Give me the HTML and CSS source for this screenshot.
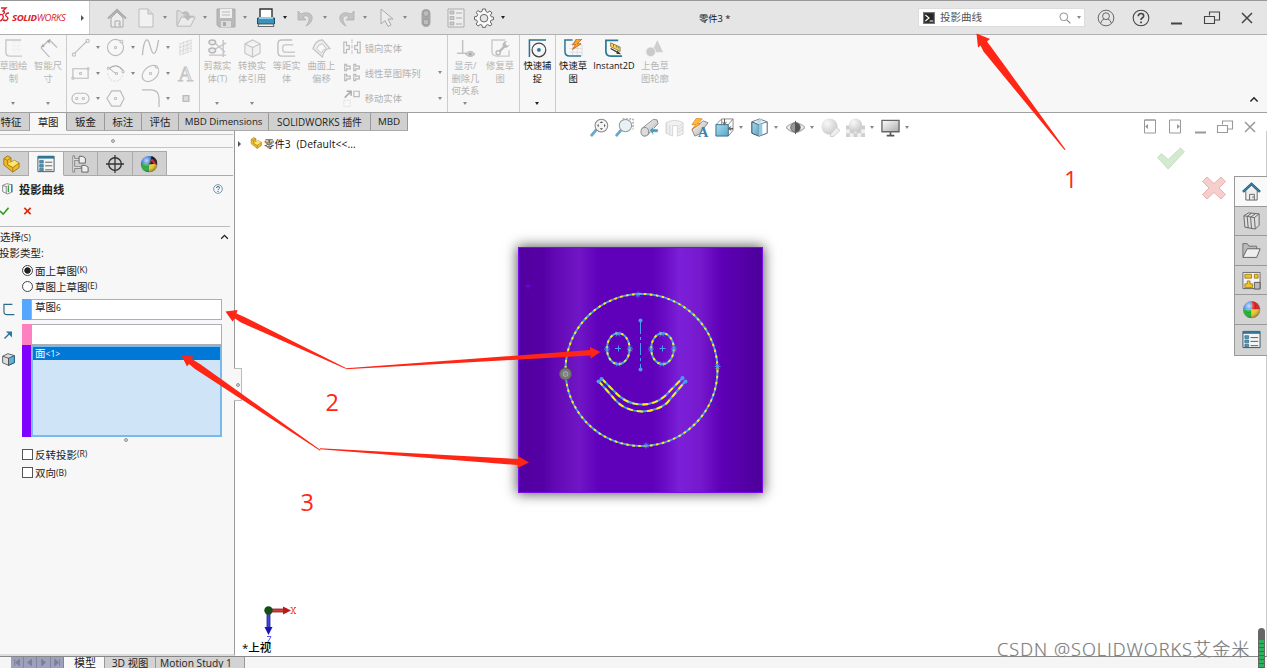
FILE: index.html
```html
<!DOCTYPE html>
<html lang="zh-CN">
<head>
  <meta charset="UTF-8">
  <meta name="viewport" content="width=device-width, initial-scale=1.0">
  <title>SOLIDWORKS - 零件3</title>
  <link rel="stylesheet" href="styles.css">
</head>
<body>

  <!-- Icon sprite -->
  <svg class="sprite" aria-hidden="true">
    <defs>
      <linearGradient id="metal" x1="0" y1="0" x2="1" y2="1"><stop offset="0" stop-color="#fff"/><stop offset="1" stop-color="#aaa"/></linearGradient>
      <radialGradient id="shade" cx=".35" cy=".3" r=".75"><stop offset="0" stop-color="#fff" stop-opacity=".75"/><stop offset=".5" stop-color="#fff" stop-opacity="0"/><stop offset="1" stop-color="#000" stop-opacity=".45"/></radialGradient>
      <radialGradient id="grayBall" cx=".35" cy=".3" r=".75"><stop offset="0" stop-color="#f8f8f8"/><stop offset="1" stop-color="#c9c9c9"/></radialGradient>
      <linearGradient id="blueFace" x1="0" y1="0" x2="1" y2="1"><stop offset="0" stop-color="#a9dcf0"/><stop offset="1" stop-color="#58a5c8"/></linearGradient>
    </defs>
    <symbol id="home" viewBox="0 0 20 20"><path d="M4 10v9h12v-9l-6-6z" fill="#ededed" stroke="#aaa"/><path d="M1 10.5 10 2l9 8.500" fill="none" stroke="#aaa" stroke-width="2"/><path d="M8 19v-6h5v6M12 15v2" fill="none" stroke="#aaa"/></symbol>
    <symbol id="home-color" viewBox="0 0 20 20"><path d="M4 9v10h12V9l-6-6z" fill="#eee" stroke="#666"/><path d="M1 10.500 10 2l9 8.500" fill="none" stroke="#1c5f80" stroke-width="2.600"/><path d="M1.500 10 10 2l8.500 8" fill="none" stroke="#4492b5" stroke-width="1"/><path d="M8 19v-6h5v6M11.500 15v2" fill="none" stroke="#666"/></symbol>
    <symbol id="new" viewBox="0 0 20 20"><path d="M3 1h9l5 5v13H3z" fill="#f1f1f1" stroke="#bbb"/><path d="M12 1v5h5" fill="#ddd" stroke="#bbb"/></symbol>
    <symbol id="open" viewBox="0 0 22 20"><path d="M1 18V2h3l2 2h3v4h10v3" fill="#ddd" stroke="#b5b5b5"/><path d="M1 19 6 9h15l-5 10z" fill="#ebebeb" stroke="#b5b5b5"/><path d="M7 4c4-3 8-1 8 4h3l-5 5-5-5h3c0-2-2-3-4-2z" fill="#bcbcbc"/></symbol>
    <symbol id="save" viewBox="0 0 20 20"><path d="M1 1h18v18H3l-2-2z" fill="#b9b9b9" stroke="#aaa"/><path d="M4 1h12v9H4z" fill="#eee"/><path d="M6 4h8M6 7h8" stroke="#bbb"/><path d="M5 13h10v6H5z" fill="#ddd"/><path d="M7 14h3v4H7z" fill="#aaa"/></symbol>
    <symbol id="print" viewBox="0 0 20 20"><path d="M4 10V1h12v9" fill="#fff" stroke="#333" stroke-width="1.400"/><path d="M1.500 10h17v6h-17z" fill="#3b93ba" stroke="#17506e"/><path d="M3 9h14v2H3z" fill="#8ed0eb"/><path d="M3 16h14l1 2.500H2z" fill="#f4f4f4" stroke="#666"/></symbol>
    <symbol id="undo" viewBox="0 0 20 20"><path d="M2 3v9h8L7 9c4-3 8 0 5 6l-2 3c9-4 8-15-2-13L5 6z" fill="#c4c4c4" stroke="#aaa" stroke-width=".7"/></symbol>
    <symbol id="cursor" viewBox="0 0 20 20"><path d="M5 1v15l4-3.500 3 6 3-1.500-3-6h5z" fill="#ececec" stroke="#aaa"/></symbol>
    <symbol id="traffic" viewBox="0 0 20 20"><rect x="5.500" y="1" width="9" height="18" rx="4.500" fill="#a7a7a7"/><circle cx="10" cy="5.500" r="3" fill="#bcbcbc" stroke="#999"/><circle cx="10" cy="14" r="3" fill="#bcbcbc" stroke="#999"/></symbol>
    <symbol id="list" viewBox="0 0 20 20"><path d="M2 1h16v18H2z" fill="#eee" stroke="#aaa"/><path d="M4 3h4v3H4zM4 8.500h4v3H4zM4 14h4v3H4z" fill="#ccc" stroke="#aaa" stroke-width=".8"/><path d="M10 5h6M10 10h6M10 16h6" stroke="#aaa"/></symbol>
    <symbol id="gear" viewBox="0 0 20 20"><path d="M8.500 1h3l.5 2.600 1.800.8L16 2.900 18 5l-1.600 2.100.8 1.700 2.300.3v2.600l-2.400.5-.8 1.800L18 16.300 16 18l-2.200-1.400-1.700.8-.6 2h-3L8 17.200l-1.700-.7L4.100 18 2 16l1.500-2.100-.8-1.800-2.200-.4V8.800L3 8.300l.7-1.700L2.200 4.400 4 2.600l2.200 1.500L8 3.400z" fill="#f8f8f8" stroke="#666" stroke-width="1"/><circle cx="10" cy="10.200" r="3.800" fill="#e5e5e5" stroke="#666"/></symbol>

    <symbol id="sketch" viewBox="0 0 20 20"><path d="M8 3h11M8 7h11M8 11h11M11 1v14M15 1v14" stroke="#f0f0f0"/><path d="M18 1H2v13q0 4 4 4h13" fill="none" stroke="#c8c8c8" stroke-width="1.500"/></symbol>
    <symbol id="smartdim" viewBox="0 0 20 20"><path d="m2 9 9-8 8 8M2 9l9 10M3 8.500 10 2" fill="none" stroke="#bdbdbd" stroke-width="1.300"/><path d="m2 9 4-1-2-3zM12 0 8 2l3 3z" fill="#aaa"/></symbol>
    <symbol id="line" viewBox="0 0 20 20"><path d="M3 17 17 3" stroke="#bbb" stroke-width="1.200"/><path d="M1.500 16h3v3h-3zM16 1.500h3v3h-3z" fill="#f7f7f7" stroke="#bbb"/></symbol>
    <symbol id="circle" viewBox="0 0 20 20"><circle cx="10" cy="10" r="8.500" fill="none" stroke="#bbb" stroke-width="1.200"/><path d="M9 9h2v2H9zM15 2.500h2.500V5H15z" fill="#fff" stroke="#bbb"/></symbol>
    <symbol id="spline" viewBox="0 0 20 20"><path d="M1.500 18C3 0 7-2 9.500 8s6 14 9-6" fill="none" stroke="#bbb" stroke-width="1.400"/></symbol>
    <symbol id="plane" viewBox="0 0 20 20"><path d="m4 6 12-4v12L4 18zM4 10l12-4M4 14l12-4M8 4v13M12 3v13" fill="#f1f1f1" stroke="#d2d2d2" stroke-dasharray="2 1"/></symbol>
    <symbol id="rect" viewBox="0 0 20 20"><path d="M2 5h16v10H2z" fill="none" stroke="#bbb" stroke-width="1.200"/><path d="M9 9h2v2H9zM1 14h2v2H1zM17 4h2v2h-2z" fill="#fff" stroke="#bbb"/></symbol>
    <symbol id="arc" viewBox="0 0 20 20"><path d="M3 5q8-7 15 2" fill="none" stroke="#b0b0b0" stroke-width="1.400"/><path d="M2 10c1 11 15 11 16-1" fill="none" stroke="#d5d5d5" stroke-dasharray="2 1.500"/><path d="m4 5 6 5" stroke="#aaa"/><path d="M10 9h2v2h-2zM1.500 3.500h2v2h-2zM17 7h2v2h-2z" fill="#fff" stroke="#bbb"/></symbol>
    <symbol id="ellipse" viewBox="0 0 20 20"><ellipse cx="10" cy="10" rx="10" ry="7" transform="rotate(-43 10 10)" fill="none" stroke="#bbb" stroke-width="1.200"/><path d="M9 9h2v2H9zM15 2h2v2h-2z" fill="#fff" stroke="#bbb"/></symbol>
    <symbol id="slot" viewBox="0 0 20 20"><rect x="1" y="4.500" width="18" height="11" rx="5.500" fill="none" stroke="#bbb" stroke-width="1.200"/><path d="M5 9h2v2H5zM12 9h2v2h-2z" fill="#fff" stroke="#bbb"/></symbol>
    <symbol id="hexagon" viewBox="0 0 20 20"><path d="m6 2 9 0 4 8-4 8H6l-5-8z" fill="none" stroke="#bbb" stroke-width="1.200"/><path d="M9 9h2v2H9z" fill="#fff" stroke="#bbb"/></symbol>
    <symbol id="fillet" viewBox="0 0 20 20"><path d="M1 1h9q9 0 9 9v9" fill="none" stroke="#bbb" stroke-width="1.300"/></symbol>
    <symbol id="point" viewBox="0 0 20 20"><path d="M7.500 7h6v6h-6z" fill="#ddd" stroke="#bbb" stroke-width="1.500"/></symbol>
    <symbol id="trim" viewBox="0 0 20 20"><path d="m7 4 11 10M7 11 19 4M1 17h18M16 1v18" stroke="#c6c6c6" stroke-width="1.500"/><ellipse cx="4.500" cy="3.500" rx="3.500" ry="2.500" fill="#eee" stroke="#b8b8b8" stroke-width="1.600"/><ellipse cx="4.500" cy="12" rx="3.500" ry="2.500" fill="#eee" stroke="#b8b8b8" stroke-width="1.600"/></symbol>
    <symbol id="convert" viewBox="0 0 20 20"><path d="m2 5 8-4 8 4v10l-8 4-8-4zM2 5l8 4 8-4M10 9v10" fill="#f1f1f1" stroke="#c6c6c6" stroke-width="1.200"/></symbol>
    <symbol id="offset" viewBox="0 0 20 20"><path d="M16 1H5Q1 1 1 5v9q0 4 4 4h14" fill="none" stroke="#c0c0c0" stroke-width="1.500"/><path d="M17 6H9Q6 6 6 9v2q0 3 3 3h10" fill="none" stroke="#ccc" stroke-width="1.500"/></symbol>
    <symbol id="surface" viewBox="0 0 20 20"><path d="M1 10Q4 1 11 1l8 9q-6 0-8 9z" fill="#ededed" stroke="#c3c3c3" stroke-width="1.300"/><path d="M5 10q2-5 6-5l4 5q-4 1-5 5z" fill="#f8f8f8" stroke="#c3c3c3"/></symbol>
    <symbol id="mirror" viewBox="0 0 22 20"><path d="M11 1v18" stroke="#bbb" stroke-dasharray="4 2"/><path d="M2 4v12h3v-4h3V8H5V4zM20 4v12h-3v-4h-3V8h3V4z" fill="none" stroke="#bbb" stroke-width="1.300"/></symbol>
    <symbol id="pattern" viewBox="0 0 22 20"><path d="M3 1v7h2V6h4V3H5V1zM13 1v7h2V6h4V3h-4V1zM3 12v7h2v-2h4v-3H5v-2zM13 12v7h2v-2h4v-3h-4v-2z" fill="none" stroke="#b8b8b8" stroke-width="1.300"/></symbol>
    <symbol id="move" viewBox="0 0 22 20"><path d="m3 9 7-7M5 2h5v5" fill="none" stroke="#aaa" stroke-width="1.700"/><path d="M13 2h6v6h-6z" fill="none" stroke="#bbb" stroke-width="1.300"/><path d="M2 12h7v7H2z" fill="none" stroke="#ddd" stroke-dasharray="2 1"/></symbol>
    <symbol id="relation" viewBox="0 0 20 20"><path d="M7 1v14M1 15h12" stroke="#c3c3c3" stroke-width="1.600"/><path d="M10 16q5-6 10 0-5 5-10 0z" fill="#ccc" stroke="#bbb"/><circle cx="15" cy="16" r="1.500" fill="#aaa"/></symbol>
    <symbol id="repair" viewBox="0 0 20 20"><path d="M15 1H1v12q0 5 5 5h13v-6" fill="none" stroke="#ccc" stroke-width="1.500"/><path d="m8 14 7-7" stroke="#bbb" stroke-width="2.600"/><path d="M17 2q-4 0-5 4 1 4 5 3l3-3-3 1-2-2z" fill="#bbb"/><circle cx="7.500" cy="14.500" r="2.200" fill="#f7f7f7" stroke="#bbb" stroke-width="1.500"/></symbol>
    <symbol id="snap" viewBox="0 0 20 20"><path d="M1.500 19V1H19" fill="none" stroke="#2d718e" stroke-width="1.600"/><circle cx="11.500" cy="11.500" r="7.200" fill="none" stroke="#444" stroke-width="1.300"/><circle cx="11.500" cy="11.500" r="2" fill="#2d789a"/></symbol>
    <symbol id="rapid" viewBox="0 0 20 20"><path d="M6 6h13M6 10h13M6 14h13M9 4v14M14 8v10M19 6v12" stroke="#ddd"/><path d="M9 1H1v12q0 5 5 5h12" fill="none" stroke="#2c7898" stroke-width="1.600"/><path d="m13 0-4 6h3l-3 5 9-6h-4l5-5z" fill="#f9a52a" stroke="#b8561b" stroke-width=".8"/></symbol>
    <symbol id="instant" viewBox="0 0 20 20"><path d="M15 1.500H2V13q0 5 5 5h12" fill="none" stroke="#2c7898" stroke-width="1.800"/><path d="m7 4 10 4.500v4.500L7 8z" fill="#fbd457" stroke="#776b36" stroke-width=".8"/><path d="M10 5.500v2.500M13 7v2M15 8v2" stroke="#665b31" stroke-width=".8"/><path d="m7 10 8 4.500" stroke="#333" stroke-width="1.400"/><path d="m14 12 4 4-5-.5z" fill="#333"/></symbol>
    <symbol id="shaded" viewBox="0 0 20 20"><path d="m13 1 6 13H7z" fill="#cfcfcf"/><circle cx="6" cy="13.500" r="5" fill="#cacaca" stroke="#eee"/></symbol>

    <symbol id="fit" viewBox="0 0 20 20"><path d="m1 19 6-7" stroke="#6ba8c4" stroke-width="3"/><circle cx="12" cy="8" r="6.700" fill="#f4f4f4" stroke="#888" stroke-width="1.100"/><path d="m12 3.500-1.700 1.700h3.400zM12 12.500l-1.700-1.700h3.400zM7.500 8l1.700-1.700v3.400zM16.500 8l-1.700-1.700v3.400z" fill="#555"/></symbol>
    <symbol id="area" viewBox="0 0 20 20"><path d="M8 1h11v11" fill="none" stroke="#777" stroke-dasharray="2 1.500"/><path d="m1 19 6-7" stroke="#6ba8c4" stroke-width="3"/><circle cx="11" cy="8" r="6.500" fill="#e8f2f6" stroke="#999" stroke-width="1.100"/></symbol>
    <symbol id="prev" viewBox="0 0 20 20"><path d="m2 11 12-9.500 4 .5 1 4L8 18l-4 1z" fill="url(#metal)" stroke="#888"/><ellipse cx="5" cy="14.500" rx="4" ry="4.500" fill="#ddd" stroke="#888"/><path d="m10 13 4-4v2.500h5v3.500h-5v3z" fill="#4a9bc0" stroke="#fff" stroke-width=".5"/></symbol>
    <symbol id="section" viewBox="0 0 20 20"><path d="M1 5q9-5 18 0v12l-6 2V8H8v11l-7-3z" fill="#f1f1f1" stroke="#d6d6d6"/><path d="m14 9 5-3M14 12l5-3M14 15l5-3M2 6v11M5 7v11" stroke="#d6d6d6"/></symbol>
    <symbol id="orient" viewBox="0 0 20 20"><path d="m1 7 6-6h12v12l-5 6M19 1l-5 6M7 1v6M14 12h5" fill="none" stroke="#888"/><path d="M1 7h13v12H1z" fill="url(#blueFace)" stroke="#386d88"/><path d="M10 1v5M8 4l2 3 2-3M19 11h-4m2-2-3 2 3 2" fill="none" stroke="#555"/></symbol>
    <symbol id="display" viewBox="0 0 20 20"><path d="m2 4 8-3 8 3v12l-8 3-8-3z" fill="#f5f5f5" stroke="#678"/><path d="m2 4 7 3v12l-7-3z" fill="url(#blueFace)" stroke="#456"/><path d="m9 7 9-3v12l-9 3z" fill="#fff" stroke="#678"/><path d="m9 7 4-1.300v11.800L9 19z" fill="#8fcbe3"/><path d="m6 3 6-2v3L9 6z" fill="#b7dfee"/></symbol>
    <symbol id="eye" viewBox="0 0 20 20"><path d="M0 10Q10 0 20 10 10 20 0 10z" fill="#eee" stroke="#aaa" stroke-width="1.200"/><circle cx="10" cy="10" r="5" fill="#999" stroke="#666"/><path d="M10 5a5 5 0 0 1 0 10z" fill="#555"/><path d="M10 3v14" stroke="#555"/></symbol>
    <symbol id="appear" viewBox="0 0 20 20"><circle cx="9" cy="9" r="8.500" fill="url(#grayBall)"/><path d="m10 17 6-7 4 3-6 6-4 1z" fill="#eee" stroke="#ccc"/></symbol>
    <symbol id="scene" viewBox="0 0 20 20"><path d="M0 9h20v11H0z" fill="#f0f0f0"/><path d="M0 8h5v4H0zM4 12h5v4H4zM11 12h5v4h-5zM0 16h4v4H0zM8 16h4v4H8zM16 16h4v4h-4zM15 8h5v4h-5z" fill="#cfcfcf"/><circle cx="10" cy="7.500" r="7" fill="url(#grayBall)"/></symbol>
    <symbol id="monitor" viewBox="0 0 20 20"><path d="M1 2.500h18v12H1z" fill="url(#metal)" stroke="#666" stroke-width="1.400"/><path d="M10 15v3M6 18.500h8" stroke="#555" stroke-width="1.800"/></symbol>

    <symbol id="part" viewBox="0 0 20 20"><path d="m2 4 4-3 4 2v5l4-2 5 3v5l-7 5-10-8z" fill="#efbd2b" stroke="#9b7514"/><path d="m2 4 4 2 4-3M6 6v5l6 3 7-5M12 14v5" fill="none" stroke="#a67d18"/><path d="m7 10 3-2 4-2 4 3-6 4z" fill="#ffe477"/></symbol>
    <symbol id="prop" viewBox="0 0 20 20"><path d="M1 1.500h18v17H1z" fill="#f5f5f5" stroke="#2f5367"/><path d="M1 1h18v3H1z" fill="#2f7595"/><path d="M3 6h4v3H3zM3 10.500h4v3H3zM3 15h4v2.500H3z" fill="#4d9aba" stroke="#2d607a" stroke-width=".7"/><path d="M9 8h8M9 12h8M9 16.500h8" stroke="#555"/></symbol>
    <symbol id="config" viewBox="0 0 20 20"><path d="M2 1v18h2v-4h7v-2H4V6h6V4H4V1z" fill="#eee" stroke="#777" stroke-width=".9"/><path d="M9 1.500h4l3 2V9H9zM12 11.500h4l3 2V19h-7z" fill="#eee" stroke="#666" stroke-width="1.100"/></symbol>
    <symbol id="target" viewBox="0 0 20 20"><circle cx="10" cy="10" r="7" fill="none" stroke="#333" stroke-width="1.500"/><path d="M10 0v20M0 10h20" stroke="#333" stroke-width="1.400"/></symbol>
    <symbol id="ball" viewBox="0 0 20 20"><path d="M10 10V1a9 9 0 0 0-9 9z" fill="#2a7be0"/><path d="M10 10V1a9 9 0 0 1 9 9z" fill="#d41818"/><path d="M10 10H1a9 9 0 0 0 9 9z" fill="#18b02c"/><path d="M10 10h9a9 9 0 0 1-9 9z" fill="#f3c62c"/><circle cx="10" cy="10" r="9.300" fill="url(#shade)"/></symbol>
    <symbol id="ball-dark" viewBox="0 0 20 20"><circle cx="10" cy="10" r="9" fill="#1e62ce"/><path d="M10 10 13 1q7 3 6 10z" fill="#111"/><path d="m13 5 5 7" stroke="#d3222a" stroke-width="2.500"/><path d="M1 10q5-2 9 1v8q-9-1-9-9z" fill="#2aa83b"/><path d="M10 11q5-2 9 0-1 8-9 8z" fill="#f2cb26"/><circle cx="10" cy="10" r="9.300" fill="url(#shade)"/></symbol>
    <symbol id="project" viewBox="0 0 18 20"><path d="m1 5 7-3 8 2v12l-7 3-8-4zM7 6v12M1 5l6 2" fill="#f4f4f4" stroke="#777" stroke-width="1.300"/><path d="M10.500 5v11" stroke="#29a944" stroke-width="2.200"/><path d="M16 3v13" stroke="#2c84bb" stroke-width="2.400"/></symbol>
    <symbol id="curve" viewBox="0 0 20 20"><path d="M16 2H3v11q0 5 5 5h11" fill="none" stroke="#2c6c88" stroke-width="1.800"/></symbol>
    <symbol id="direction" viewBox="0 0 20 20"><path d="m3 17 9-9" fill="none" stroke="#2c7898" stroke-width="3"/><path d="M6 3h12v12z" fill="#2c7898"/></symbol>
    <symbol id="face" viewBox="0 0 20 20"><path d="m1 5 8-4 10 3v11l-9 4-9-4z" fill="#ddd" stroke="#555" stroke-width="1.400"/><path d="m10 8 9-4v11l-9 4z" fill="#60b3d7" stroke="#245a75" stroke-width="1.400"/><path d="m1 5 9 3v11" fill="none" stroke="#555" stroke-width="1.400"/></symbol>

    <symbol id="library" viewBox="0 0 20 20"><path d="m2 5 5-3 11 1v12l-4 4-11-2z" fill="#ddd" stroke="#666"/><path d="m2 5 11 2 1 12M13 7l5-4M5.500 6l1 12M9 6.500l1 12M5.500 5.500l4.500-3M9 6.500l5-3.500" fill="none" stroke="#666"/></symbol>
    <symbol id="folder" viewBox="0 0 22 20"><path d="M1 17V2h5l2 3h9v4" fill="#bbb" stroke="#666"/><path d="M1 18 6 8h15l-4 10z" fill="#eee" stroke="#555"/></symbol>
    <symbol id="palette" viewBox="0 0 20 20"><path d="M1 1.500h18v17H1z" fill="#f4f4f4" stroke="#666"/><path d="M3 3.500h7v4H3zM13 3.500h4v4h-4zM5.500 10.500h3v3H11v4H3v-4h2.500z" fill="#f4c126" stroke="#8f7016" stroke-width=".8"/><path d="M13 12h6v7h-6z" fill="#bbb" stroke="#555"/></symbol>

    <symbol id="search" viewBox="0 0 20 20"><circle cx="8" cy="8" r="6.500" fill="none" stroke="#888" stroke-width="1.500"/><path d="m13 13 6 6" stroke="#888" stroke-width="2"/></symbol>
    <symbol id="prompt" viewBox="0 0 20 20"><path d="M0 0h20v20H0z" fill="#777"/><path d="M2 2h16v16H2z" fill="#262626"/><path d="m4 5 6 5-6 5M11 15h6" fill="none" stroke="#fff" stroke-width="2"/></symbol>
    <symbol id="user" viewBox="0 0 20 20"><circle cx="10" cy="10" r="8.700" fill="none" stroke="#666" stroke-width="1.100"/><circle cx="10" cy="8" r="3.800" fill="none" stroke="#666" stroke-width="1.100"/><path d="M4 16q1-4 4-5M16 16q-1-4-4-5" fill="none" stroke="#666" stroke-width="1.100"/></symbol>
    <symbol id="help" viewBox="0 0 20 20"><circle cx="10" cy="10" r="8.700" fill="none" stroke="currentColor" stroke-width="1.200"/><path d="M7 8q0-3 3-3t3 2.700Q13 9 11 10.300q-1 .7-1 2" fill="none" stroke="currentColor" stroke-width="1.800"/><path d="M9 13.800h2v2H9z" fill="currentColor"/></symbol>
    <symbol id="min" viewBox="0 0 18 18"><path d="M4 14.500h11" stroke="currentColor" stroke-width="2"/></symbol>
    <symbol id="restore" viewBox="0 0 18 18"><path d="M6.500 6.500v-3.500h10v8h-4.500M1.500 7.500h10v7h-10z" fill="none" stroke="currentColor" stroke-width="1.100"/></symbol>
    <symbol id="close" viewBox="0 0 18 18"><path d="m4 4 10 10M14 4 4 14" stroke="currentColor" stroke-width="1.500"/></symbol>
    <symbol id="dock-l" viewBox="0 0 18 18"><path d="M3.500 2v13h11V2zM3.500 2h11" fill="none" stroke="currentColor"/><path d="M4 8.500 7 6v5z" fill="currentColor"/></symbol>
    <symbol id="dock-r" viewBox="0 0 18 18"><path d="M3.500 2v13h11V2z" fill="none" stroke="currentColor"/><path d="m14 8.500-3-2.500v5z" fill="currentColor"/></symbol>
    <symbol id="caret" viewBox="0 0 10 10"><path d="m2 7 3-3 3 3" fill="none" stroke="currentColor" stroke-width="1.200"/></symbol>
  </svg>

  <div class="app">

    <!-- Title bar -->
    <header class="titlebar">
      <div class="logo">
        <svg class="ds" viewBox="0 0 10 16"><path d="m1 1 5 0-3 3q3 1 0 3M-1 8q5-2 4 3-1 3-4 3M9 6q-4 0-3 3 3 2 1 4-1 1-4 0" fill="none" stroke="#d9232b" stroke-width="1.400"/></svg>
        <span class="brand"><b>SOLID</b>WORKS</span>
        <i class="play"></i>
      </div>
      <nav class="quick">
        <span class="tool home"><svg><use href="#home"/></svg></span>
        <span class="tool"><svg><use href="#new"/></svg><i class="down"></i></span>
        <span class="tool"><svg><use href="#open"/></svg><i class="down"></i></span>
        <span class="tool"><svg><use href="#save"/></svg><i class="down"></i></span>
        <span class="tool"><svg><use href="#print"/></svg><i class="down dark"></i></span>
        <span class="tool"><svg><use href="#undo"/></svg><i class="down"></i></span>
        <span class="tool"><svg class="flip"><use href="#undo"/></svg><i class="down"></i></span>
        <span class="tool"><svg><use href="#cursor"/></svg><i class="down"></i></span>
        <span class="tool narrow"><svg><use href="#traffic"/></svg></span>
        <span class="tool narrow wide"><svg><use href="#list"/></svg></span>
        <span class="tool"><svg><use href="#gear"/></svg><i class="down dark"></i></span>
      </nav>
      <div class="doc-title">零件3 *</div>
      <div class="search">
        <svg class="prompt"><use href="#prompt"/></svg>
        <span>投影曲线</span>
        <svg class="glass"><use href="#search"/></svg>
        <i class="down"></i>
      </div>
      <div class="window-buttons">
        <svg><use href="#user"/></svg>
        <svg><use href="#help"/></svg>
        <svg><use href="#min"/></svg>
        <svg><use href="#restore"/></svg>
        <svg><use href="#close"/></svg>
      </div>
    </header>

    <!-- Ribbon -->
    <section class="ribbon">
      <div class="group first">
        <div class="big"><svg><use href="#sketch"/></svg><span>草图绘<br>制</span><i class="down"></i></div>
        <div class="big"><svg><use href="#smartdim"/></svg><span>智能尺<br>寸</span><i class="down"></i></div>
      </div>
      <div class="group shapes">
        <span><svg><use href="#line"/></svg><i class="down"></i></span>
        <span><svg><use href="#circle"/></svg><i class="down"></i></span>
        <span><svg><use href="#spline"/></svg><i class="down"></i></span>
        <span><svg><use href="#plane"/></svg></span>
        <span><svg><use href="#rect"/></svg><i class="down"></i></span>
        <span><svg><use href="#arc"/></svg><i class="down"></i></span>
        <span><svg><use href="#ellipse"/></svg><i class="down"></i></span>
        <span><svg class="letter" viewBox="0 0 20 20"><text x="2" y="18">A</text></svg></span>
        <span><svg><use href="#slot"/></svg><i class="down"></i></span>
        <span><svg><use href="#hexagon"/></svg></span>
        <span><svg><use href="#fillet"/></svg><i class="down"></i></span>
        <span><svg><use href="#point"/></svg></span>
      </div>
      <div class="group edit">
        <div class="big"><svg><use href="#trim"/></svg><span>剪裁实<br>体(T)</span><i class="down"></i></div>
        <div class="big"><svg><use href="#convert"/></svg><span>转换实<br>体引用</span><i class="down"></i></div>
        <div class="big"><svg><use href="#offset"/></svg><span>等距实<br>体</span></div>
        <div class="big"><svg><use href="#surface"/></svg><span>曲面上<br>偏移</span></div>
        <div class="rows">
          <div><svg><use href="#mirror"/></svg><span>镜向实体</span></div>
          <div><svg><use href="#pattern"/></svg><span>线性草图阵列</span><i class="down"></i></div>
          <div><svg><use href="#move"/></svg><span>移动实体</span><i class="down"></i></div>
        </div>
      </div>
      <div class="group relations">
        <div class="big"><svg><use href="#relation"/></svg><span>显示/<br>删除几<br>何关系</span><i class="down"></i></div>
        <div class="big"><svg><use href="#repair"/></svg><span>修复草<br>图</span></div>
      </div>
      <div class="group">
        <div class="big active"><svg><use href="#snap"/></svg><span>快速捕<br>捉</span><i class="down dark"></i></div>
      </div>
      <div class="group last">
        <div class="big active"><svg><use href="#rapid"/></svg><span>快速草<br>图</span></div>
        <div class="big active instant"><svg><use href="#instant"/></svg><span>Instant2D</span></div>
        <div class="big"><svg><use href="#shaded"/></svg><span>上色草<br>图轮廓</span></div>
      </div>
      <svg class="collapse"><use href="#caret"/></svg>
    </section>

    <!-- Command tabs -->
    <div class="tab-row">
      <nav class="tabs">
        <span class="t-feature">特征</span>
        <span class="active">草图</span>
        <span>钣金</span>
        <span>标注</span>
        <span>评估</span>
        <span class="t-dim">MBD Dimensions</span>
        <span class="t-sw">SOLIDWORKS 插件</span>
        <span class="t-mbd">MBD</span>
      </nav>
    </div>

    <main class="workspace">
      <aside class="panel">
        <div class="grip"><i class="dot"></i></div>
        <nav class="panel-tabs">
          <span><svg><use href="#part"/></svg></span>
          <span class="active"><svg><use href="#prop"/></svg></span>
          <span><svg><use href="#config"/></svg></span>
          <span><svg><use href="#target"/></svg></span>
          <span><svg><use href="#ball-dark"/></svg></span>
        </nav>
        <div class="feature-head">
          <svg><use href="#project"/></svg>
          <b>投影曲线</b>
          <svg class="help"><use href="#help"/></svg>
        </div>
        <div class="confirm">
          <svg viewBox="0 0 10 10"><path d="m0 5 3.500 3.500L9.500 1.500" fill="none" stroke="#2d9a12" stroke-width="1.700"/></svg>
          <svg viewBox="0 0 10 10"><path d="m1.500 1.500 7 7M8.500 1.500l-7 7" stroke="#e1280f" stroke-width="1.800"/></svg>
        </div>
        <div class="section-head"><span>选择<small>(S)</small></span><svg><use href="#caret"/></svg></div>
        <div class="field-label">投影类型:</div>
        <label class="option"><i class="radio checked"></i>面上草图<small>(K)</small></label>
        <label class="option"><i class="radio"></i>草图上草图<small>(E)</small></label>
        <div class="pick sketch-pick">
          <svg><use href="#curve"/></svg><i class="swatch blue"></i><div class="box">草图<small>6</small></div>
        </div>
        <div class="pick dir-pick">
          <svg><use href="#direction"/></svg><i class="swatch pink"></i><div class="box"></div>
        </div>
        <div class="pick face-pick">
          <svg><use href="#face"/></svg><i class="swatch violet"></i><div class="box"><div class="selected">面<small>&lt;1&gt;</small></div></div>
        </div>
        <div class="list-grip"><i class="dot"></i></div>
        <label class="option check"><i class="checkbox"></i>反转投影<small>(R)</small></label>
        <label class="option check"><i class="checkbox"></i>双向<small>(B)</small></label>
      </aside>

      <section class="viewport">
        <div class="tree"><i class="play"></i><svg><use href="#part"/></svg><span>零件3&nbsp; (Default&lt;&lt;...</span></div>

        <div class="view-tools">
          <svg><use href="#fit"/></svg>
          <svg><use href="#area"/></svg>
          <svg><use href="#prev"/></svg>
          <svg><use href="#section"/></svg>
          <svg class="annot" viewBox="0 0 20 20"><path d="m2 12 12-9 5 2-9 12-5 2z" fill="url(#metal)" stroke="#888"/><path d="M7 0 2 7h4l-4 5 9-6H8l5-5z" fill="#ffba35" stroke="#d07618" stroke-width=".7"/><text x="8.500" y="19.500">A</text></svg>
          <span><svg><use href="#orient"/></svg><i class="down"></i></span>
          <span><svg><use href="#display"/></svg><i class="down"></i></span>
          <span><svg><use href="#eye"/></svg><i class="down"></i></span>
          <svg class="appear"><use href="#appear"/></svg>
          <span><svg><use href="#scene"/></svg><i class="down"></i></span>
          <span><svg><use href="#monitor"/></svg><i class="down"></i></span>
        </div>

        <div class="doc-buttons">
          <svg><use href="#dock-l"/></svg>
          <svg><use href="#dock-r"/></svg>
          <svg><use href="#min"/></svg>
          <svg><use href="#restore"/></svg>
          <svg><use href="#close"/></svg>
        </div>

        <svg class="corner-ok" viewBox="0 0 30 24"><path d="m1 11 4-4 7 6L25 1l4 4-17 18z" fill="#d3ead0" stroke="#c3dfbf"/></svg>
        <svg class="corner-cancel" viewBox="0 0 24 24"><path d="m5 1 7 6.500L19 1l4.500 4.500L17 12l6.500 6.500L19 23l-7-6.500L5 23 .5 18.500 7 12 .5 5.500z" fill="#f6cfcc" stroke="#e6b5b2"/></svg>

        <div class="flyout"><i class="dot"></i></div>

        <!-- Part, top view -->
        <svg class="model" viewBox="0 0 245 246">
          <defs>
            <linearGradient id="body">
              <stop offset="0" stop-color="#5200a0"/>
              <stop offset=".1" stop-color="#5500a6"/>
              <stop offset=".15" stop-color="#6209b4"/>
              <stop offset=".25" stop-color="#7016c6"/>
              <stop offset=".33" stop-color="#5f00ba"/>
              <stop offset=".55" stop-color="#5f00ba"/>
              <stop offset=".6" stop-color="#6a0cc6"/>
              <stop offset=".66" stop-color="#7c20d8"/>
              <stop offset=".75" stop-color="#7518cc"/>
              <stop offset=".83" stop-color="#5d00b6"/>
              <stop offset=".92" stop-color="#5500a8"/>
              <stop offset="1" stop-color="#4d009a"/>
            </linearGradient>
          </defs>
          <rect x=".5" y=".5" width="244" height="245" fill="url(#body)" stroke="#7a0bf0"/>
          <path d="M7 39h6M10 36v6" stroke="#7208d8"/>
          <g class="curve-base">
            <circle cx="123.500" cy="123" r="76"/>
            <ellipse cx="100.300" cy="101.700" rx="11.300" ry="15.500"/>
            <ellipse cx="144.500" cy="101.700" rx="11.300" ry="15.500"/>
            <path d="M80.500 134 96 151.500Q106 164 124 164.500 139 164 149 156L167.500 134M83.500 131.500 96 144Q108 157.500 124 157.500 137 157.500 147 149L164.500 131"/>
          </g>
          <g class="curve-dash">
            <circle cx="123.500" cy="123" r="76"/>
            <ellipse cx="100.300" cy="101.700" rx="11.300" ry="15.500"/>
            <ellipse cx="144.500" cy="101.700" rx="11.300" ry="15.500"/>
            <path class="long" d="M80.500 134 96 151.500Q106 164 124 164.500 139 164 149 156L167.500 134M83.500 131.500 96 144Q108 157.500 124 157.500 137 157.500 147 149L164.500 131"/>
          </g>
          <path d="M122.500 75v46" stroke="#4a9cf0" stroke-dasharray="12 3 3 3"/>
          <path d="M97 101.500h6M100.500 98.500v6M141.500 101.500h6M144.500 98.500v6" stroke="#4a9cf0"/>
          <g fill="#4a9cf0">
            <circle cx="122.500" cy="73.500" r="2"/><circle cx="122.500" cy="122.500" r="2"/>
            <circle cx="80.500" cy="134.500" r="2"/><circle cx="83.500" cy="132" r="2"/><circle cx="164.500" cy="131" r="2"/><circle cx="167.500" cy="134.500" r="2"/>
          </g>
          <path class="marks" d="M117 47.500h6M120 44.500v6M118 45.500l4 4M122 45.500l-4 4M196.500 119.500h6M199.500 116v7M197.500 117.500l4 4M201.500 117.500l-4 4M125 198.500h6M128 195.500v6M126 196.500l4 4M130 196.500l-4 4M97 87h6M98 84.500l4 5M102 84.500l-4 5M97 117h6M98 114.500l4 5M102 114.500l-4 5M141 87h6M142 84.500l4 5M146 84.500l-4 5M141 117h6M142 114.500l4 5M146 114.500l-4 5M86 102h6M87 99.500l4 5M91 99.500l-4 5M109 102h6M110 99.500l4 5M114 99.500l-4 5M130 102h6M131 99.500l4 5M135 99.500l-4 5M153 102h6M154 99.500l4 5M158 99.500l-4 5"/>
          <circle cx="47.500" cy="127" r="6" fill="#777" stroke="#555"/><circle cx="47.500" cy="127" r="2.500" fill="#888" stroke="#aaa"/>
        </svg>

        <!-- Axis triad -->
        <svg class="triad" viewBox="0 0 36 44">
          <path d="M5 5h19v3H5z" fill="#d04040" stroke="#8f1515" stroke-width=".8"/><path d="M20 2.500 28 6.500 20 10.500z" fill="#b81919"/>
          <path d="M4 7h3v18H4z" fill="#4545e0" stroke="#1c1c90" stroke-width=".8"/><path d="M1.500 23h8l-4 8z" fill="#1616b0"/>
          <circle cx="5.500" cy="6.500" r="4.200" fill="#124e16"/>
          <path d="m28.500 3.500 3.500 6M32 3.500l-3.500 6M27.500 3.500h2M31 3.500h2M27.500 9.500h2M31 9.500h2" stroke="#ff4545"/>
          <path d="M4 32.500h4l-4 7h4" fill="none" stroke="#5555ff"/>
        </svg>
        <div class="view-name">*上视</div>

        <nav class="task-pane">
          <span class="active"><svg><use href="#home-color"/></svg></span>
          <span><svg><use href="#library"/></svg></span>
          <span><svg><use href="#folder"/></svg></span>
          <span><svg><use href="#palette"/></svg></span>
          <span><svg><use href="#ball"/></svg></span>
          <span><svg><use href="#prop"/></svg></span>
        </nav>
      </section>
    </main>

    <footer class="bottom">
      <div class="player">
        <svg viewBox="0 0 13 11"><path d="M4 2v7M9 2v7L5 5.500z"/></svg>
        <svg viewBox="0 0 13 11"><path d="M8 2v7L4 5.500z"/></svg>
        <svg viewBox="0 0 13 11"><path d="M5 2v7l4-3.500z"/></svg>
        <svg viewBox="0 0 13 11"><path d="M9 2v7M4 2v7l4-3.500z"/></svg>
      </div>
      <span class="active">模型</span>
      <span class="b-3d">3D 视图</span>
      <span class="b-motion">Motion Study 1</span>
    </footer>
  </div>

  <!-- Tutorial callouts -->
  <svg class="callouts" viewBox="0 0 1267 668">
    <g fill="#ff2615">
      <path d="m976.500 33.500 13.500 5.500-3 2.500 4.500 6L1065.500 149.500 1064.500 150 983.500 51.500 980.500 45.500 978 47.500z"/>
      <path d="m225.500 311.500 12-1.500-1 3.500 9 4L346 368l-.5.800L241 322.500l-6-4-2.500 3z"/>
      <path d="m600.500 352-10.500-5v3L346 368.300v1L590.500 355.500v3z"/>
      <path d="m181.500 355.500 12 1-1.500 2.500 8 5L320.500 450l-.5.700L195 369l-6-5-2 2.500z"/>
      <path d="m529 462.500-11-6.500v3L320 448.200v1L517.500 465v3z"/>
    </g>
    <g class="numbers">
      <text x="1064" y="188">1</text>
      <text x="325.500" y="411">2</text>
      <text x="300.500" y="511">3</text>
    </g>
  </svg>
  <div class="watermark">CSDN @SOLIDWORKS艾金米</div>
  <div class="meter"></div>

</body>
</html>
```
FILE: styles.css
```css
* {
  box-sizing: border-box;
}

body {
  margin: 0;
  width: 1267px;
  height: 668px;
  overflow: hidden;
  position: relative;
  background: #fff;
  color: #222;
  font-family: "Open Sans", "Noto Sans CJK SC", sans-serif;
  font-size: 10.5px;
}

.sprite {
  position: absolute;
  width: 0;
  height: 0;
}

svg {
  display: block;
  flex: none;
}

.app {
  display: flex;
  flex-direction: column;
  height: 668px;
}

/* arrows and dots */
.down {
  flex: none;
  width: 0;
  height: 0;
  border: 2.5px solid transparent;
  border-top: 3px solid #888;
  border-bottom: 0;
}

.down.dark {
  border-top-color: #222;
}

.play {
  width: 0;
  height: 0;
  border: 3px solid transparent;
  border-left: 3.5px solid #555;
  border-right: 0;
}

.dot {
  width: 4px;
  height: 4px;
  border: 1px solid #999;
  border-radius: 50%;
  background: #ccc;
}

/* title bar */
.titlebar {
  display: flex;
  align-items: center;
  height: 35px;
  flex: none;
  background: #e5e5e5;
  border-top: 1px solid #999;
  border-bottom: 1px solid #b0b0b0;
}

.logo {
  display: flex;
  align-items: center;
  width: 90px;
  height: 33px;
  background: #fff;
  border-right: 1px solid #ccc;
}

.ds {
  width: 10px;
  height: 16px;
  margin-top: -5px;
}

.brand {
  width: 57px;
  margin-left: 2px;
  font-size: 9.6px;
  font-style: italic;
  letter-spacing: -0.4px;
  color: #d9232b;
}

.logo .play {
  margin-left: 12px;
}

.quick {
  display: flex;
  margin-left: 14px;
  width: 410px;
}

.tool {
  display: flex;
  align-items: center;
  width: 40px;
  padding-left: 3px;
  flex: none;
}

.tool svg {
  width: 20px;
  height: 20px;
  margin-right: 7px;
}

.tool.home {
  width: 29px;
}

.tool.narrow {
  width: 30px;
}

.tool.wide {
  width: 28px;
}

.flip {
  transform: scaleX(-1);
}

.doc-title {
  width: 60px;
  margin-left: 185px;
  font-size: 9.3px;
  color: #111;
}

.search {
  display: flex;
  align-items: center;
  width: 167px;
  height: 19px;
  margin-left: 159px;
  padding: 0 3px 0 4px;
  background: #fff;
  border: 1px solid #ddd;
  color: #555;
}

.prompt {
  width: 12px;
  height: 12px;
  margin-right: 5px;
}

.search span {
  margin-top: -2px;
}

.glass {
  width: 12px;
  height: 12px;
  margin: 1px 6px 0 auto;
}

.window-buttons {
  display: flex;
  align-items: center;
  gap: 17.2px;
  margin-left: 12px;
  color: #444;
}

.window-buttons svg {
  width: 18px;
  height: 18px;
}

/* ribbon */
.ribbon {
  display: flex;
  height: 78px;
  flex: none;
  background: #f7f7f7;
  border-bottom: 1px solid #a0a0a0;
}

.group {
  display: flex;
  flex: none;
  border-right: 1px solid #ccc;
}

.group.last {
  border-right: 0;
}

.group.first {
  margin-left: -4px;
  width: 71px;
}

.big {
  display: flex;
  flex-direction: column;
  flex: none;
  align-items: center;
  width: 34.7px;
  height: 77px;
  padding: 4px 0 7px;
  text-align: center;
  font-size: 9.3px;
  line-height: 12.5px;
  color: #b5b5b5;
  white-space: nowrap;
}

.big svg {
  width: 19px;
  height: 19px;
  margin-bottom: 2px;
}

.big .down {
  margin-top: auto;
}

.big.active {
  color: #111;
}

.big.instant {
  width: 47px;
  font-size: 9.1px;
}

.last .big:last-child {
  width: 35px;
}

.shapes {
  display: grid;
  grid-template-columns: 35px 35px 35px 27px;
  grid-template-rows: 25px 26px 25px;
  width: 133px;
}

.shapes span {
  display: flex;
  align-items: center;
  padding-left: 4px;
}

.shapes svg {
  width: 19px;
  height: 19px;
  margin-right: 6px;
}

.letter {
  font: 22px "Liberation Serif", serif;
  fill: #f0f0f0;
  stroke: #c3c3c3;
  stroke-width: 0.9;
}

.edit {
  width: 248px;
}

.rows {
  width: 107px;
  display: flex;
  flex-direction: column;
}

.rows div {
  display: flex;
  align-items: center;
  height: 25.3px;
  padding: 0 4px 0 3px;
  font-size: 9.3px;
  color: #b0b0b0;
}

.rows svg {
  width: 20px;
  height: 19px;
  margin-right: 3px;
}

.rows .down {
  margin-left: auto;
}

.relations {
  width: 72px;
}

.collapse {
  width: 12px;
  height: 12px;
  margin: 58px 7px 0 auto;
  color: #222;
}

/* command tabs */
.tab-row {
  height: 18px;
  flex: none;
  background: #fff;
}

.tabs {
  display: flex;
  width: 408px;
}

.tabs span {
  width: 37.3px;
  height: 18px;
  line-height: 18px;
  text-align: center;
  background: #d0d0d0;
  border-right: 1px solid #999;
  border-bottom: 1px solid #aaa;
  white-space: nowrap;
}

.tabs .active {
  background: #f7f7f7;
  border-bottom-color: #f7f7f7;
}

.tabs .t-feature {
  width: 30px;
  text-indent: -7px;
}

.tabs .t-dim {
  width: 90px;
  font-size: 9.7px;
}

.tabs .t-sw {
  width: 102px;
  font-size: 9.9px;
}

.tabs .t-mbd {
  width: 37px;
  font-size: 9.8px;
}

/* workspace */
.workspace {
  display: flex;
  flex: 1;
  min-height: 0;
}

.panel {
  width: 235px;
  flex: none;
  background: #f7f7f7;
  border-right: 1px solid #999;
  border-bottom: 2px solid #ddd;
}

.panel small {
  font-size: 8.6px;
}

.grip {
  display: flex;
  align-items: center;
  justify-content: center;
  width: 233px;
  height: 14px;
  margin-top: 3px;
  padding-right: 8px;
  border-top: 1px solid #c5c5c5;
  border-bottom: 1px solid #c5c5c5;
}

.panel-tabs {
  display: flex;
  width: 233px;
  height: 25px;
  margin-top: 3px;
  border-bottom: 1px solid #aaa;
}

.panel-tabs span {
  display: flex;
  align-items: center;
  justify-content: center;
  width: 34.5px;
  height: 25px;
  background: #d0d0d0;
  border: 1px solid #aaa;
  border-left: 0;
}

.panel-tabs span:first-child {
  width: 29px;
  padding-right: 6px;
}

.panel-tabs .active {
  background: #f7f7f7;
  border-bottom-color: #f7f7f7;
}

.panel-tabs svg {
  width: 18px;
  height: 18px;
}

.feature-head {
  display: flex;
  align-items: center;
  height: 26px;
  padding: 0 0 1px 2px;
  font-size: 11.3px;
}

.feature-head svg {
  width: 11px;
  height: 13px;
  margin-right: 6px;
}

.feature-head .help {
  width: 10px;
  height: 10px;
  margin: 0 11px 0 auto;
  color: #245d80;
}

.confirm {
  display: flex;
  align-items: center;
  gap: 14px;
  width: 230px;
  height: 25px;
  padding-bottom: 6px;
  border-bottom: 1px solid #bbb;
}

.confirm svg {
  width: 9px;
  height: 10px;
}

.section-head {
  display: flex;
  align-items: center;
  justify-content: space-between;
  height: 17px;
  margin-top: 1px;
  padding-right: 4px;
}

.section-head svg {
  width: 11px;
  height: 11px;
}

.field-label {
  height: 17px;
  line-height: 16px;
  margin-left: -1px;
}

.option {
  display: flex;
  align-items: center;
  height: 16px;
  padding-left: 22px;
}

.radio {
  width: 11px;
  height: 11px;
  margin-right: 2px;
  border: 1px solid #444;
  border-radius: 50%;
  background: #fff;
}

.radio.checked {
  background: radial-gradient(circle, #222 2.8px, #fff 3.6px);
}

.pick {
  display: flex;
  align-items: flex-start;
}

.pick svg {
  width: 13px;
  height: 13px;
  margin: 4px 7px 0 2px;
}

.swatch {
  width: 9px;
  height: 100%;
}

.blue {
  background: #55a6ff;
}

.pink {
  background: #ff80c0;
}

.violet {
  background: #8000ff;
}

.box {
  width: 191px;
  height: 100%;
  padding-left: 3px;
  line-height: 15px;
  background: #fff;
  border: 1px solid #abadb9;
}

.sketch-pick {
  height: 21px;
  margin-top: 5px;
}

.dir-pick {
  height: 21px;
  margin-top: 4px;
}

.dir-pick svg {
  width: 10px;
  height: 10px;
  margin: 6px 9px 0 3px;
}

.face-pick {
  height: 92px;
}

.face-pick svg {
  margin-top: 8px;
}

.face-pick .box {
  padding: 0;
  background: #cfe4f7;
  border: 2px solid #78bbea;
}

.selected {
  height: 13px;
  padding-left: 2px;
  line-height: 12px;
  background: #0078d7;
  color: #fff;
}

.list-grip {
  display: flex;
  justify-content: center;
  width: 252px;
  height: 8px;
  padding-top: 1px;
}

.option.check {
  height: 18.5px;
}

.checkbox {
  width: 11px;
  height: 11px;
  margin-right: 2px;
  border: 1px solid #555;
  background: #fff;
}

/* viewport */
.viewport {
  position: relative;
  flex: 1;
  background: #fff;
  border-right: 1px solid #ccc;
}

.tree {
  display: flex;
  align-items: center;
  height: 24px;
  padding: 1px 0 0 3px;
  font-size: 10.3px;
  letter-spacing: 0.12px;
  color: #111;
}

.tree svg {
  width: 12px;
  height: 12px;
  margin: -2px 2px 0 9px;
}

.view-tools {
  position: absolute;
  left: 355px;
  top: -13px;
  display: flex;
  align-items: center;
  gap: 6px;
}

.view-tools svg {
  width: 19px;
  height: 19px;
}

.view-tools span {
  display: flex;
  align-items: center;
  gap: 5px;
  width: 29.3px;
}

.annot text {
  font: bold 15px "Liberation Serif", serif;
  fill: #3d83a5;
}

.doc-buttons {
  position: absolute;
  right: 7px;
  top: -13px;
  display: flex;
  gap: 7px;
  color: #999;
}

.doc-buttons svg {
  width: 18px;
  height: 18px;
}

.corner-ok {
  position: absolute;
  left: 921px;
  top: 16px;
  width: 30px;
  height: 23px;
}

.corner-cancel {
  position: absolute;
  left: 967px;
  top: 45px;
  width: 24px;
  height: 24px;
}

.flyout {
  position: absolute;
  left: -1px;
  top: 237px;
  display: flex;
  align-items: center;
  justify-content: center;
  width: 8px;
  height: 33px;
  background: #f7f7f7;
  border: 1px solid #bbb;
  border-left: 0;
}

.model {
  position: absolute;
  left: 283px;
  top: 116px;
  width: 245px;
  height: 246px;
  box-shadow: 0 0 12px 1px rgba(0, 0, 0, 0.65);
}

.curve-base {
  fill: none;
  stroke: #4da0f0;
  stroke-width: 2;
}

.curve-dash {
  fill: none;
  stroke: #fff000;
  stroke-width: 1.9;
  stroke-dasharray: 2.5 3.5;
}

.curve-dash .long {
  stroke-dasharray: 6 4;
}

.marks {
  fill: none;
  stroke: #4a9cf0;
  stroke-width: 0.9;
}

.triad {
  position: absolute;
  left: 28px;
  top: 473px;
  width: 36px;
  height: 44px;
}

.view-name {
  position: absolute;
  left: 7px;
  top: 508px;
  font-size: 11.5px;
  font-weight: 500;
  line-height: 18px;
  color: #000;
}

.task-pane {
  position: absolute;
  right: -1px;
  top: 45px;
  width: 33px;
  border: 1px solid #999;
  border-right: 0;
}

.task-pane span {
  display: flex;
  align-items: center;
  justify-content: center;
  height: 29.6px;
  background: #d3d3d3;
  border-bottom: 1px solid #999;
}

.task-pane span:last-child {
  border-bottom: 0;
}

.task-pane .active {
  background: #f9f9f9;
}

.task-pane svg {
  width: 19px;
  height: 19px;
}

/* bottom tabs */
.bottom {
  display: flex;
  height: 12px;
  flex: none;
  background: #f5f5f5;
  border-top: 1px solid #888;
}

.bottom span {
  width: 51px;
  height: 11px;
  line-height: 12px;
  text-align: center;
  background: #d3d3d3;
  border-right: 1px solid #999;
  white-space: nowrap;
}

.bottom .active {
  width: 41px;
  padding-left: 2px;
  background: #f9f9f9;
  font-size: 11px;
}

.bottom .b-3d {
  font-size: 10.3px;
}

.bottom .b-motion {
  width: 89px;
  padding-right: 8px;
  font-size: 10.2px;
}

.player {
  display: flex;
  width: 53px;
  margin-left: 11px;
  background: #9fa0bb;
}

.player svg {
  width: 13.2px;
  height: 11px;
  fill: #7d7f99;
  stroke: #7d7f99;
  border-right: 1px solid #8385a0;
}

/* callouts over the window */
.callouts {
  position: absolute;
  left: 0;
  top: 0;
  width: 1267px;
  height: 668px;
}

.numbers {
  font-size: 23.5px;
  fill: #ff2615;
}

.watermark {
  position: absolute;
  left: 997px;
  top: 636px;
  font-size: 18.2px;
  line-height: 27px;
  font-weight: 300;
  letter-spacing: 1px;
  color: #777;
  text-shadow: 0 0 1px #bbb;
  white-space: nowrap;
}

.meter {
  position: absolute;
  left: 1258px;
  top: 628px;
  width: 7px;
  height: 40px;
  border: 1px solid #666;
  border-top: 12px solid #666;
  border-bottom: 0;
  border-radius: 4px 4px 0 0;
  background: repeating-linear-gradient(#29b35c 0 3px, #1d8040 3px 4px);
}
```
